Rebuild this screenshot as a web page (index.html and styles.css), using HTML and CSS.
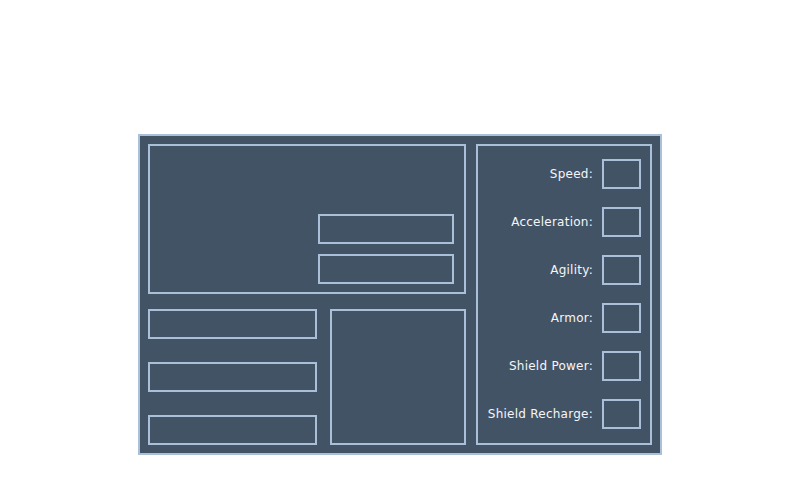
FILE: index.html
```html
<!DOCTYPE html>
<html lang="en">
  <head>
    <meta charset="UTF-8" />
    <meta name="viewport" content="width=device-width, initial-scale=1.0" />
    <title>Ship Stats</title>
    <link rel="stylesheet" href="styles.css">
  </head>
  <body>
    <div class="panel">
      <div class="left">
        <div class="preview">
          <div class="field"></div>
          <div class="field"></div>
        </div>
        <div class="bottom">
          <div class="slots">
            <div class="field"></div>
            <div class="field"></div>
            <div class="field"></div>
          </div>
          <div class="square"></div>
        </div>
      </div>
      <div class="stats">
        <div class="stat"><span>Speed:</span><div class="value"></div></div>
        <div class="stat"><span>Acceleration:</span><div class="value"></div></div>
        <div class="stat"><span>Agility:</span><div class="value"></div></div>
        <div class="stat"><span>Armor:</span><div class="value"></div></div>
        <div class="stat"><span>Shield Power:</span><div class="value"></div></div>
        <div class="stat"><span>Shield Recharge:</span><div class="value"></div></div>
      </div>
    </div>
  </body>
</html>
```
FILE: styles.css
```css
body {
  margin: 0;
  background: #fff;
  font-family: "DejaVu Sans", sans-serif;
  font-size: 12px;
  letter-spacing: 0.25px;
  color: #f4f6f8;
}
.panel {
  display: flex;
  gap: 10px;
  width: 504px;
  height: 301px;
  margin: 134px 0 0 138px;
  padding: 8px;
  background: #435366;
  border: 2px solid #a9c0d8;
}
.left {
  display: flex;
  flex-direction: column;
  gap: 15px;
  width: 318px;
}
.preview {
  box-sizing: border-box;
  height: 150px;
  border: 2px solid #a9c0d8;
  display: flex;
  flex-direction: column;
  align-items: flex-end;
  justify-content: flex-end;
  gap: 10px;
  padding: 0 10px 8px 0;
}
.field {
  box-sizing: border-box;
  height: 30px;
  border: 2px solid #a9c0d8;
}
.preview .field {
  width: 136px;
}
.bottom {
  flex: 1;
  display: flex;
  gap: 13px;
}
.slots {
  width: 169px;
  display: flex;
  flex-direction: column;
  justify-content: space-between;
}
.square {
  flex: 1;
  box-sizing: border-box;
  border: 2px solid #a9c0d8;
}
.stats {
  flex: 1;
  box-sizing: border-box;
  border: 2px solid #a9c0d8;
  display: flex;
  flex-direction: column;
  justify-content: space-between;
  padding: 13px 9px 14px 0;
}
.stat {
  display: flex;
  justify-content: flex-end;
  align-items: center;
  gap: 9px;
}
.value {
  box-sizing: border-box;
  width: 39px;
  height: 30px;
  border: 2px solid #a9c0d8;
}
```
